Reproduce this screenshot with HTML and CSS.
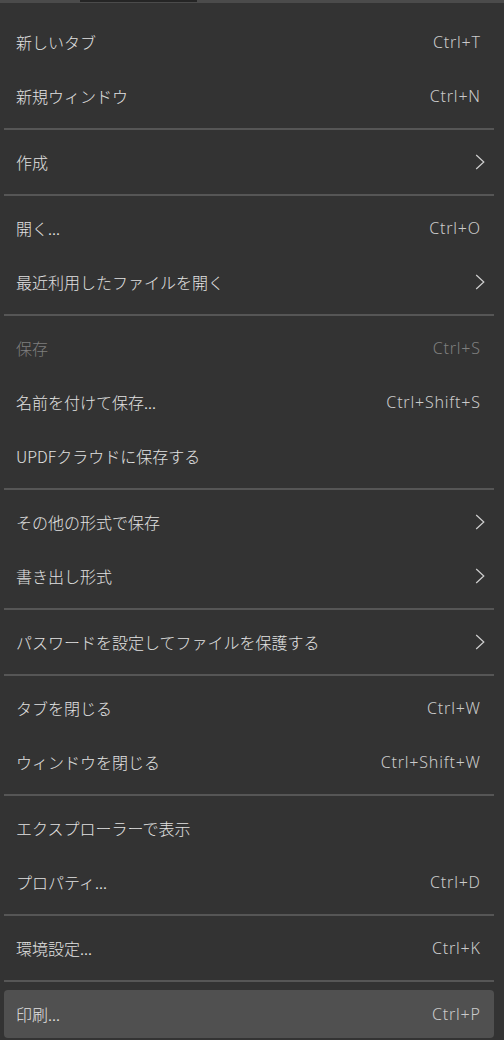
FILE: index.html
```html
<!DOCTYPE html>
<html lang="ja">
<head>
<meta charset="utf-8">
<link rel="stylesheet" href="styles.css">
</head>
<body>
<div class="topbar"><div class="tab"></div></div>
<div class="menu">
  <div class="item"><span class="label">新しいタブ</span><span class="key">Ctrl+T</span></div>
  <div class="item"><span class="label">新規ウィンドウ</span><span class="key">Ctrl+N</span></div>
  <div class="sep"></div>
  <div class="item"><span class="label">作成</span><svg class="chev" viewBox="0 0 10 16"><path d="M1.2 1 L8.8 8 L1.2 15"/></svg></div>
  <div class="sep"></div>
  <div class="item"><span class="label">開く...</span><span class="key">Ctrl+O</span></div>
  <div class="item"><span class="label">最近利用したファイルを開く</span><svg class="chev" viewBox="0 0 10 16"><path d="M1.2 1 L8.8 8 L1.2 15"/></svg></div>
  <div class="sep"></div>
  <div class="item disabled"><span class="label">保存</span><span class="key">Ctrl+S</span></div>
  <div class="item"><span class="label">名前を付けて保存...</span><span class="key">Ctrl+Shift+S</span></div>
  <div class="item"><span class="label">UPDFクラウドに保存する</span></div>
  <div class="sep"></div>
  <div class="item"><span class="label">その他の形式で保存</span><svg class="chev" viewBox="0 0 10 16"><path d="M1.2 1 L8.8 8 L1.2 15"/></svg></div>
  <div class="item"><span class="label">書き出し形式</span><svg class="chev" viewBox="0 0 10 16"><path d="M1.2 1 L8.8 8 L1.2 15"/></svg></div>
  <div class="sep"></div>
  <div class="item"><span class="label">パスワードを設定してファイルを保護する</span><svg class="chev" viewBox="0 0 10 16"><path d="M1.2 1 L8.8 8 L1.2 15"/></svg></div>
  <div class="sep"></div>
  <div class="item"><span class="label">タブを閉じる</span><span class="key">Ctrl+W</span></div>
  <div class="item"><span class="label">ウィンドウを閉じる</span><span class="key">Ctrl+Shift+W</span></div>
  <div class="sep"></div>
  <div class="item"><span class="label">エクスプローラーで表示</span></div>
  <div class="item"><span class="label">プロパティ...</span><span class="key">Ctrl+D</span></div>
  <div class="sep"></div>
  <div class="item"><span class="label">環境設定...</span><span class="key">Ctrl+K</span></div>
  <div class="sep"></div>
  <div class="item active"><span class="label">印刷...</span><span class="key">Ctrl+P</span></div>
</div>
</body>
</html>
```

FILE: styles.css
```css
html, body {
  margin: 0;
  padding: 0;
  background: #333333;
  height: 100%;
  overflow: hidden;
}
body {
  font-family: "Noto Sans CJK JP", "Noto Sans", sans-serif;
  color: #e2e2e2;
}
.topbar {
  height: 3px;
  background: #4b4b4b;
  display: flex;
}
.tab {
  margin-left: 80px;
  width: 117px;
  height: 2px;
  background: #252525;
}
.menu {
  padding: 12px 10px 0 4px;
  display: flex;
  flex-direction: column;
}
.item {
  height: 48px;
  margin: 3px 0;
  padding: 0 14px 0 12px;
  display: flex;
  align-items: center;
  justify-content: space-between;
  border-radius: 4px;
  font-size: 16px;
}
.label {
  font-weight: 300;
  letter-spacing: 0;
  white-space: nowrap;
}
.key {
  font-family: "Noto Sans", sans-serif;
  font-size: 16px;
  font-weight: 300;
  letter-spacing: 0.8px;
  margin-right: -0.8px;
  color: #cbcbcb;
}
.disabled .label, .disabled .key {
  color: #7f7f7f;
}
.active {
  background: #505050;
}
.chev {
  width: 10px;
  height: 16px;
  margin-right: -5px;
  fill: none;
  stroke: #cfcfcf;
  stroke-width: 1.2;
}
.sep {
  height: 12px;
  display: flex;
  align-items: center;
}
.sep::before {
  content: "";
  display: block;
  width: 100%;
  height: 2px;
  background: #565656;
}
```
